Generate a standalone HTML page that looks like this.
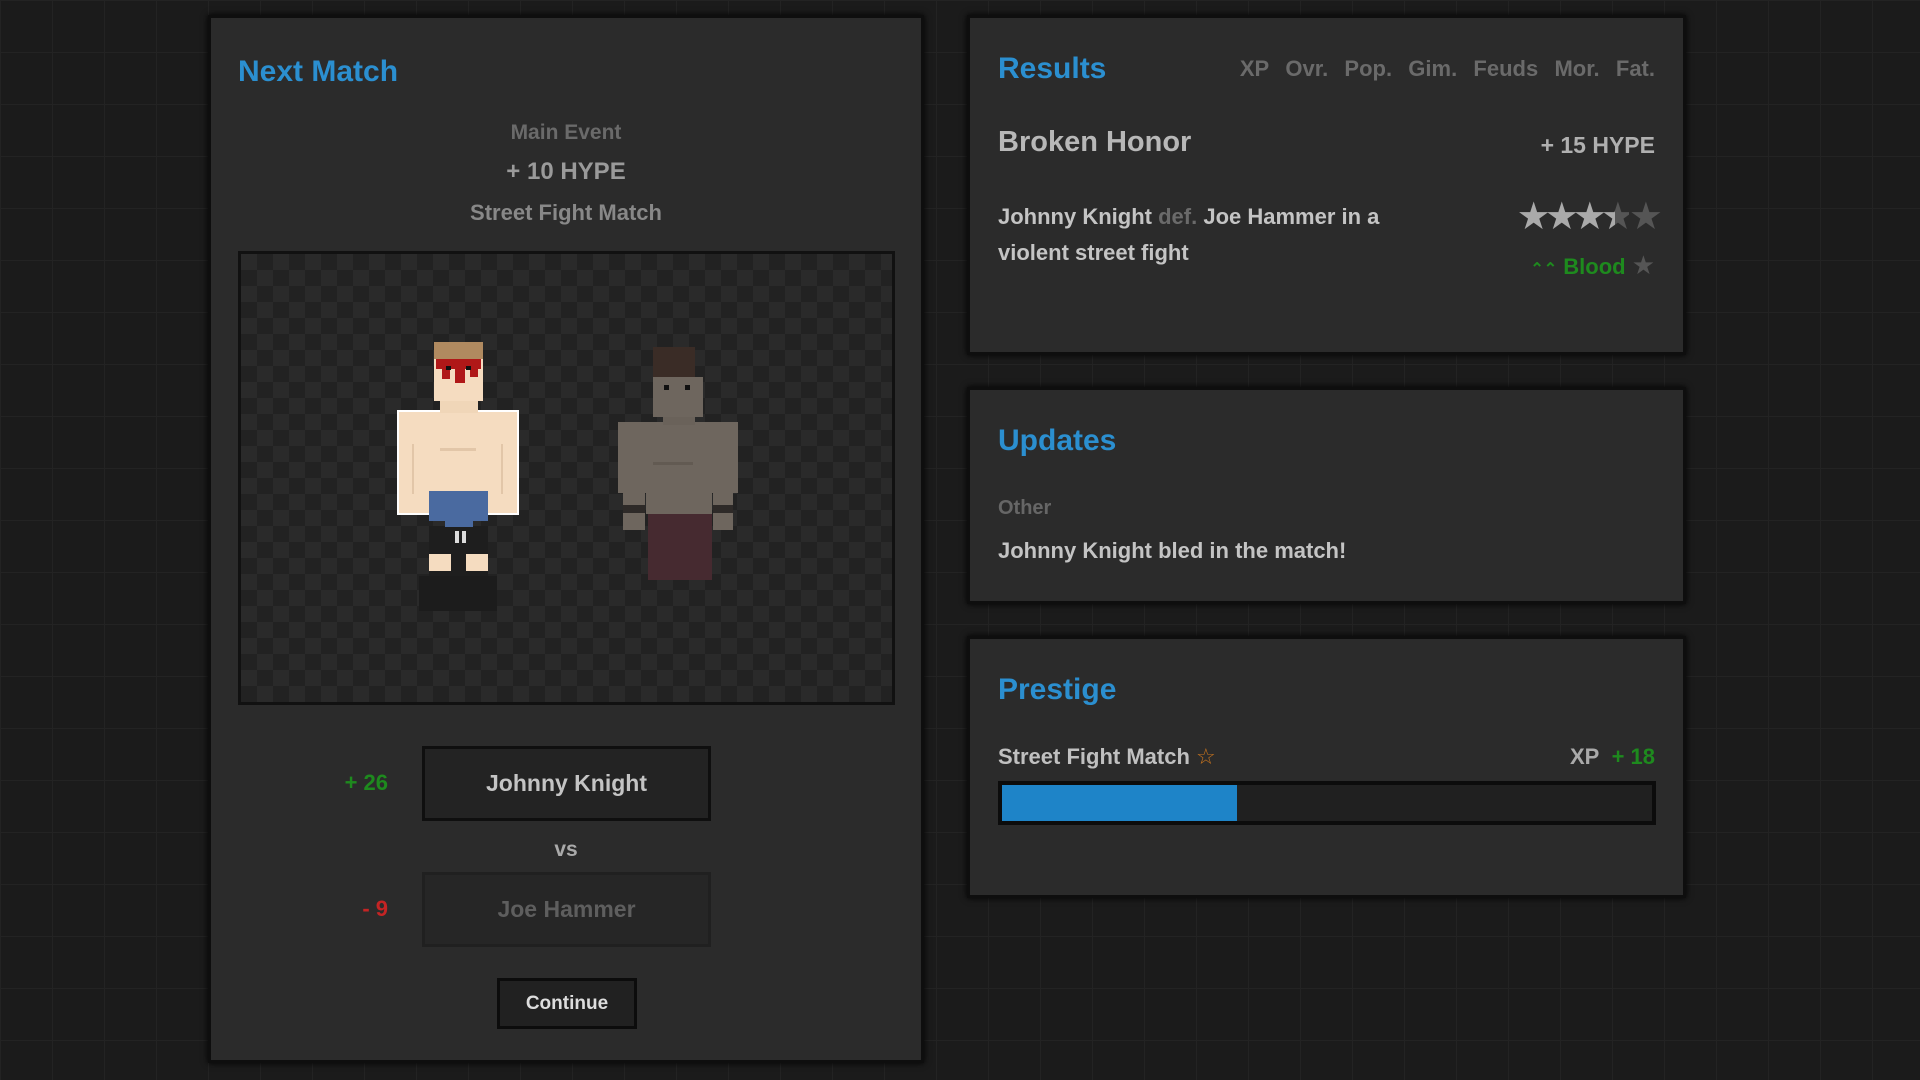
<!DOCTYPE html>
<html><head><meta charset="utf-8"><style>
*{margin:0;padding:0;box-sizing:border-box}
body{width:1920px;height:1080px;overflow:hidden;background-color:#1b1b1b;
background-image:linear-gradient(#232323 1px,transparent 1px),linear-gradient(90deg,#232323 1px,transparent 1px);
background-size:52px 52px;font-family:"Liberation Sans",sans-serif;font-weight:bold;position:relative}
.p{position:absolute;background:#2b2b2b;border:3px solid #0e0e0e;box-shadow:0 0 6px #000}
.t{position:absolute;white-space:nowrap}
.h{color:#2b8fd0;font-size:30px;font-family:"Liberation Sans",sans-serif;font-weight:bold}
.c{text-align:center;left:0;width:100%}
</style></head><body>

<div class="p" style="left:208px;top:15px;width:716px;height:1048px">
  <div class="t h" style="left:27px;top:37px">Next Match</div>
  <div class="t c" style="top:103px;font-size:21px;color:#6a6a6a">Main Event</div>
  <div class="t c" style="top:140px;font-size:24px;color:#9a9a9a">+ 10 HYPE</div>
  <div class="t c" style="top:182px;font-size:22px;color:#888">Street Fight Match</div>
  <div style="position:absolute;left:27px;top:233px;width:657px;height:454px;border:3px solid #111;
    background-color:#2a2a2a;background-image:linear-gradient(45deg,#222 25%,transparent 25%,transparent 75%,#222 75%),linear-gradient(45deg,#222 25%,transparent 25%,transparent 75%,#222 75%);
    background-size:32px 32px;background-position:0 0,16px 16px"></div>
  <svg style="position:absolute;left:-211px;top:-18px" width="1920" height="1080" shape-rendering="crispEdges">
    <g transform="translate(0,-14)">
    <rect x="419" y="590" width="78" height="35" fill="#1c1c1c"/>
    <rect x="429" y="540" width="59" height="50" fill="#1e1e1e"/>
    <rect x="429" y="568" width="22" height="17" fill="#f5dcc0"/>
    <rect x="466" y="568" width="22" height="17" fill="#f5dcc0"/>
    <rect x="455" y="545" width="4" height="12" fill="#ddd"/><rect x="462" y="545" width="4" height="12" fill="#ddd"/>
    <rect x="398" y="425" width="120" height="103" fill="#f5dcc0" stroke="#fff" stroke-width="2"/>
    <rect x="429" y="440" width="59" height="90" fill="#f5dcc0"/>
    <rect x="429" y="505" width="59" height="30" fill="#4a6aa0"/>
    <rect x="445" y="535" width="28" height="6" fill="#4a6aa0"/>
    <rect x="440" y="415" width="38" height="12" fill="#f0d6b8"/>
    <rect x="434" y="356" width="49" height="22" fill="#b08a60"/>
    <rect x="434" y="373" width="49" height="42" fill="#f5dcc0"/>
    <rect x="436" y="373" width="45" height="10" fill="#b01818"/>
    <rect x="442" y="383" width="8" height="10" fill="#b01818"/><rect x="455" y="383" width="10" height="14" fill="#b01818"/><rect x="470" y="383" width="8" height="8" fill="#b01818"/>
    <rect x="446" y="380" width="5" height="4" fill="#111"/><rect x="466" y="380" width="5" height="4" fill="#111"/>
    <rect x="412" y="458" width="2" height="50" fill="#e2c6a8"/><rect x="501" y="458" width="2" height="50" fill="#e2c6a8"/>
    <rect x="440" y="462" width="36" height="3" fill="#e2c6a8"/>
    </g>
    <g transform="translate(3,0)">
    <rect x="645" y="512" width="64" height="68" fill="#462a30"/>
    <rect x="615" y="422" width="120" height="71" fill="#6e665e"/>
    <rect x="643" y="490" width="66" height="24" fill="#6e665e"/>
    <rect x="620" y="493" width="22" height="37" fill="#6e665e"/>
    <rect x="710" y="493" width="20" height="37" fill="#6e665e"/>
    <rect x="620" y="505" width="22" height="8" fill="#2e2a28"/><rect x="710" y="505" width="20" height="8" fill="#2e2a28"/>
    <rect x="660" y="413" width="32" height="12" fill="#6a625a"/>
    <rect x="650" y="347" width="42" height="32" fill="#3a2c26"/>
    <rect x="650" y="377" width="50" height="40" fill="#6e665e"/>
    <rect x="661" y="385" width="5" height="5" fill="#111"/><rect x="682" y="385" width="5" height="5" fill="#111"/>
    <rect x="650" y="462" width="40" height="3" fill="#625a52"/>
    </g>
  </svg>
  <div class="t" style="right:533px;top:752px;font-size:22px;color:#1e8a1e">+ 26</div>
  <div style="position:absolute;left:211px;top:728px;width:289px;height:75px;background:#232323;border:3px solid #0f0f0f;color:#c4c4c4;font-size:23px;text-align:center;line-height:69px">Johnny Knight</div>
  <div class="t c" style="top:820px;font-size:21px;color:#aaa">vs</div>
  <div class="t" style="right:533px;top:878px;font-size:22px;color:#c42424">- 9</div>
  <div style="position:absolute;left:211px;top:854px;width:289px;height:75px;background:#262626;border:3px solid #202020;color:#5e5e5e;font-size:23px;text-align:center;line-height:69px">Joe Hammer</div>
  <div style="position:absolute;left:286px;top:960px;width:140px;height:51px;background:#212121;border:3px solid #0c0c0c;color:#ddd;font-size:19px;text-align:center;line-height:45px">Continue</div>
</div>

<div class="p" style="left:967px;top:15px;width:719px;height:340px">
  <div class="t h" style="left:28px;top:34px">Results</div>
  <div class="t" style="right:28px;top:38px;font-size:22px;color:#6a6a6a;word-spacing:2px">XP&nbsp; Ovr.&nbsp; Pop.&nbsp; Gim.&nbsp; Feuds&nbsp; Mor.&nbsp; Fat.</div>
  <div class="t" style="left:28px;top:108px;font-size:29px;color:#b8b8b8">Broken Honor</div>
  <div class="t" style="right:28px;top:114px;font-size:23px;color:#b0b0b0">+ 15 HYPE</div>
  <div class="t" style="left:28px;top:181px;font-size:22px;color:#c4c4c4;line-height:36px;white-space:normal;width:440px">Johnny Knight <span style="color:#6a6a6a">def.</span> Joe Hammer in a violent street fight</div>
  <div class="t" style="right:26px;top:176px;font-size:38px;letter-spacing:-6px;color:#aaa;font-family:'DejaVu Sans',sans-serif">★★★<span style="background:linear-gradient(90deg,#aaa 50%,#555 50%);-webkit-background-clip:text;color:transparent">★</span><span style="color:#555">★</span></div>
  <div class="t" style="right:28px;top:233px;font-size:22px;color:#1e8a1e"><span style="font-size:16px">⌃⌃</span> Blood <span style="color:#555;font-family:'DejaVu Sans',sans-serif;font-size:26px">★</span></div>
</div>

<div class="p" style="left:967px;top:387px;width:719px;height:217px">
  <div class="t h" style="left:28px;top:34px">Updates</div>
  <div class="t" style="left:28px;top:107px;font-size:20px;color:#666">Other</div>
  <div class="t" style="left:28px;top:148px;font-size:22px;color:#c4c4c4">Johnny Knight bled in the match!</div>
</div>

<div class="p" style="left:967px;top:636px;width:719px;height:262px">
  <div class="t h" style="left:28px;top:34px">Prestige</div>
  <div class="t" style="left:28px;top:105px;font-size:22px;color:#c0c0c0">Street Fight Match <span style="color:#c8741e;font-family:'DejaVu Sans',sans-serif;font-weight:normal">☆</span></div>
  <div class="t" style="right:28px;top:105px;font-size:22px;color:#aaa">XP&nbsp; <span style="color:#1e8a1e">+ 18</span></div>
  <div style="position:absolute;left:28px;top:142px;width:658px;height:44px;background:#202020;border:4px solid #0c0c0c">
    <div style="width:235px;height:100%;background:#1e84c8"></div>
  </div>
</div>
</body></html>
